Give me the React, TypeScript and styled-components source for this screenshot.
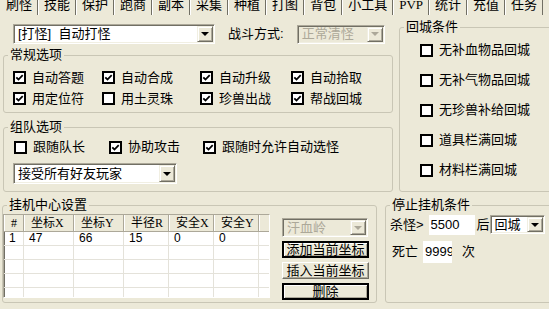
import React from 'react';
import styled, { createGlobalStyle } from 'styled-components';

const GlobalStyle = createGlobalStyle`
  html, body {
    margin: 0;
    padding: 0;
    background: #ece9d8;
  }
  body {
    font-family: "Liberation Sans", "Noto Sans CJK SC", sans-serif;
    font-size: 13px;
    line-height: 14px;
    color: #000;
  }
  * {
    box-sizing: border-box;
  }
`;

const TABS = ['刷怪', '技能', '保护', '跑商', '副本', '采集', '种植', '打图', '背包', '小工具', 'PVP', '统计', '充值', '任务'];

const ROUTINE = [
  { label: '自动答题', checked: true },
  { label: '自动合成', checked: true },
  { label: '自动升级', checked: true },
  { label: '自动拾取', checked: true },
  { label: '用定位符', checked: true },
  { label: '用土灵珠', checked: false },
  { label: '珍兽出战', checked: true },
  { label: '帮战回城', checked: true },
];

const TEAM = [
  { label: '跟随队长', checked: false },
  { label: '协助攻击', checked: true },
  { label: '跟随时允许自动选怪', checked: true },
];

const RETURN_RULES = ['无补血物品回城', '无补气物品回城', '无珍兽补给回城', '道具栏满回城', '材料栏满回城'];

const COLUMNS = [
  { title: '#', width: 20 },
  { title: '坐标X', width: 50 },
  { title: '坐标Y', width: 50 },
  { title: '半径R', width: 45 },
  { title: '安全X', width: 45 },
  { title: '安全Y', width: 45 },
  { title: '', width: 12 },
];

const POINTS = [
  ['1', '47', '66', '15', '0', '0', ''],
  ['', '', '', '', '', '', ''],
  ['', '', '', '', '', '', ''],
  ['', '', '', '', '', '', ''],
  ['', '', '', '', '', '', ''],
];

const gridColumns = COLUMNS.map(c => `${c.width}px`).join(' ');

type CheckProps = { label: string; checked: boolean };

const Check = ({ label, checked }: CheckProps) => (
  <CheckItem>
    <Box>
      {checked && (
        <svg width="9" height="9" viewBox="0 0 9 9">
          <path d="M1.3 4.3 3.5 6.5 7.7 2.1" fill="none" stroke="#000" strokeWidth="1.8" />
        </svg>
      )}
    </Box>
    <span>{label}</span>
  </CheckItem>
);

type ComboProps = { value: string; width: number; height?: number; disabled?: boolean };

const Combo = ({ value, width, height = 20, disabled = false }: ComboProps) => (
  <ComboBox $width={width} $height={height} $disabled={disabled}>
    <ComboValue $disabled={disabled}>{value}</ComboValue>
    <DropButton>
      <Arrow $disabled={disabled} />
    </DropButton>
  </ComboBox>
);

export default function App() {
  return (
    <Window>
      <GlobalStyle />
      <TabBar>
        {TABS.map((tab, i) => (
          <Tab key={tab} $active={i === 0}>
            {tab}
          </Tab>
        ))}
      </TabBar>

      <TopArea>
        <LeftColumn>
          <ModeRow>
            <Combo value="[打怪]  自动打怪" width={202} />
            <FieldLabel>战斗方式:</FieldLabel>
            <Combo value="正常清怪" width={88} height={19} disabled />
          </ModeRow>

          <Group $top={4}>
            <Legend>常规选项</Legend>
            <CheckGrid $cols="89px 98px 91px auto" $row={21} $pad="5px 0 3px 9px">
              {ROUTINE.map(item => (
                <Check key={item.label} {...item} />
              ))}
            </CheckGrid>
          </Group>

          <Group $top={7}>
            <Legend>组队选项</Legend>
            <TeamBody>
              <CheckGrid $cols="95px 94px auto" $row={20} $pad="0 0 0 1px">
                {TEAM.map(item => (
                  <Check key={item.label} {...item} />
                ))}
              </CheckGrid>
              <Combo value="接受所有好友玩家" width={164} height={21} />
            </TeamBody>
          </Group>
        </LeftColumn>

        <RightColumn>
          <Group $top={0} $grow>
            <Legend>回城条件</Legend>
            <RuleList>
              {RETURN_RULES.map(rule => (
                <RuleRow key={rule}>
                  <Check label={rule} checked={false} />
                </RuleRow>
              ))}
            </RuleList>
          </Group>
        </RightColumn>
      </TopArea>

      <BottomArea>
        <Group $top={0} $width={375}>
          <Legend>挂机中心设置</Legend>
          <CenterBody>
            <ListView>
              <HeaderRow>
                {COLUMNS.map((col, i) => (
                  <HeaderCell key={i}>{col.title}</HeaderCell>
                ))}
              </HeaderRow>
              {POINTS.map((row, r) => (
                <DataRow key={r}>
                  {row.map((cell, c) => (
                    <DataCell key={c}>{cell}</DataCell>
                  ))}
                </DataRow>
              ))}
            </ListView>
            <SideActions>
              <Combo value="汗血岭" width={86} height={19} disabled />
              <ActionButton $default>添加当前坐标</ActionButton>
              <ActionButton>插入当前坐标</ActionButton>
              <ActionButton $default>删除</ActionButton>
            </SideActions>
          </CenterBody>
        </Group>

        <Group $top={0} $width={170} $left={8}>
          <Legend>停止挂机条件</Legend>
          <StopBody>
            <StopRow>
              <span>杀怪&gt;</span>
              <NumberInput readOnly value="5500" $width={46} $height={20} $left={5} />
              <Unit $left={2}>后</Unit>
              <Combo value="回城" width={55} height={19} />
            </StopRow>
            <StopRow $indent={2} $top={4}>
              <span>死亡</span>
              <NumberInput readOnly value="9999" $width={29} $height={22} $left={5} />
              <Unit $left={10}>次</Unit>
            </StopRow>
          </StopBody>
        </Group>
      </BottomArea>
    </Window>
  );
}

const Window = styled.div`
  width: 549px;
  height: 309px;
  overflow: hidden;
  background: #ece9d8;
`;

const TabBar = styled.div`
  display: flex;
  height: 15px;
  overflow: hidden;
`;

const Tab = styled.div<{ $active?: boolean }>`
  flex: none;
  height: 17px;
  margin-top: -2px;
  padding: 0 5px;
  line-height: 13px;
  font-family: "Liberation Serif", "Noto Sans CJK SC", serif;
  border-left: 1px solid ${p => (p.$active ? 'transparent' : '#ffffff')};
  border-right: 1px solid #716f64;
`;

const TopArea = styled.div`
  display: flex;
  gap: 6px;
  padding-left: 3px;
`;

const LeftColumn = styled.div`
  display: flex;
  flex-direction: column;
  width: 390px;
  flex: none;
  padding-top: 9px;
`;

const RightColumn = styled.div`
  display: flex;
  flex-direction: column;
  width: 154px;
  flex: none;
  padding-top: 5px;
`;

const ModeRow = styled.div`
  display: flex;
  align-items: center;
  height: 20px;
  padding-left: 10px;
`;

const FieldLabel = styled.span`
  margin: 0 13px 0 13px;
`;

const Group = styled.fieldset<{ $top: number; $width?: number; $left?: number; $grow?: boolean }>`
  margin: ${p => p.$top}px 0 0 ${p => p.$left ?? 0}px;
  padding: 0;
  min-width: 0;
  width: ${p => (p.$width ? `${p.$width}px` : 'auto')};
  flex: ${p => (p.$width ? 'none' : p.$grow ? '1' : 'initial')};
  border: 1px solid #c9c6b5;
  border-radius: 3px;
`;

const Legend = styled.legend`
  margin-left: 4px;
  padding: 0 2px;
  line-height: 14px;
`;

const CheckGrid = styled.div<{ $cols: string; $row: number; $pad: string }>`
  display: grid;
  grid-template-columns: ${p => p.$cols};
  grid-auto-rows: ${p => p.$row}px;
  align-items: center;
  padding: ${p => p.$pad};
`;

const CheckItem = styled.label`
  display: flex;
  align-items: center;
  gap: 6px;
  white-space: nowrap;
`;

const Box = styled.span`
  flex: none;
  width: 13px;
  height: 13px;
  border: 2px solid #000;
  background: #fff;
  display: inline-flex;
  align-items: center;
  justify-content: center;
`;

const TeamBody = styled.div`
  display: flex;
  flex-direction: column;
  gap: 6px;
  padding: 3px 0 7px 9px;
`;

const ComboBox = styled.div<{ $width: number; $height: number; $disabled: boolean }>`
  flex: none;
  display: flex;
  width: ${p => p.$width}px;
  height: ${p => p.$height}px;
  padding: 1px;
  border: 1px solid;
  border-color: #aca899 #ffffff #ffffff #aca899;
  box-shadow: inset 1px 1px 0 #716f64, inset -1px -1px 0 #f1efe2;
  background: ${p => (p.$disabled ? '#ece9d8' : '#ffffff')};
`;

const ComboValue = styled.div<{ $disabled: boolean }>`
  flex: 1;
  min-width: 0;
  padding-left: 3px;
  display: flex;
  align-items: center;
  white-space: pre;
  overflow: hidden;
  color: ${p => (p.$disabled ? '#aca899' : '#000')};
`;

const DropButton = styled.div`
  flex: none;
  width: 16px;
  display: flex;
  align-items: center;
  justify-content: center;
  background: #ece9d8;
  border: 1px solid;
  border-color: #f1efe2 #716f64 #716f64 #f1efe2;
  box-shadow: inset 1px 1px 0 #ffffff, inset -1px -1px 0 #aca899;
`;

const Arrow = styled.span<{ $disabled: boolean }>`
  width: 0;
  height: 0;
  border-left: 4px solid transparent;
  border-right: 4px solid transparent;
  border-top: 4px solid ${p => (p.$disabled ? '#aca899' : '#000')};
`;

const RuleList = styled.div`
  display: flex;
  flex-direction: column;
  padding: 1px 0 5px 20px;
`;

const RuleRow = styled.div`
  display: flex;
  align-items: center;
  height: 30px;
`;

const BottomArea = styled.div`
  display: flex;
  margin-top: 6px;
  padding-left: 2px;
`;

const CenterBody = styled.div`
  display: flex;
  gap: 12px;
  padding: 2px 0 2px 0;
`;

const ListView = styled.div`
  flex: none;
  width: 267px;
  height: 84px;
  overflow: hidden;
  background: #fff;
  border: 1px solid;
  border-color: #aca899 #ffffff #ffffff #aca899;
  box-shadow: inset 1px 1px 0 #716f64;
  font-size: 12px;
`;

const HeaderRow = styled.div`
  display: grid;
  grid-template-columns: ${gridColumns};
  height: 17px;
  background: #ece9d8;
  border-bottom: 1px solid #aca899;
  font-family: "Liberation Serif", "Noto Sans CJK SC", serif;
`;

const HeaderCell = styled.div`
  padding-left: 6px;
  line-height: 16px;
  white-space: nowrap;
  overflow: hidden;
  border-left: 1px solid #ffffff;
  border-right: 1px solid #aca899;
`;

const DataRow = styled.div`
  display: grid;
  grid-template-columns: ${gridColumns};
  height: 14px;
`;

const DataCell = styled.div`
  padding-left: 5px;
  line-height: 13px;
  border-right: 1px solid #e4e2da;
  border-bottom: 1px solid #e4e2da;
`;

const SideActions = styled.div`
  display: flex;
  flex-direction: column;
  gap: 4px;
  padding-top: 4px;
`;

const ActionButton = styled.button<{ $default?: boolean }>`
  width: 87px;
  height: 17px;
  margin: 0;
  padding: 0;
  font: inherit;
  line-height: 13px;
  color: #000;
  background: #ece9d8;
  border: ${p => (p.$default ? '2px solid #000' : '1px solid')};
  border-color: ${p => (p.$default ? '#000' : '#ffffff #716f64 #716f64 #ffffff')};
  box-shadow: ${p => (p.$default ? 'inset 1px 1px 0 #fff, inset -1px -1px 0 #aca899' : 'inset -1px -1px 0 #aca899')};
  &:first-of-type {
    margin-top: 0;
  }
`;

const StopBody = styled.div`
  display: flex;
  flex-direction: column;
  padding: 1px 0 0 4px;
`;

const StopRow = styled.div<{ $indent?: number; $top?: number }>`
  display: flex;
  align-items: center;
  height: 23px;
  margin-top: ${p => p.$top ?? 0}px;
  padding-left: ${p => p.$indent ?? 0}px;
  white-space: nowrap;
`;

const NumberInput = styled.input<{ $width: number; $height: number; $left: number }>`
  flex: none;
  width: ${p => p.$width}px;
  height: ${p => p.$height}px;
  margin: 0 0 0 ${p => p.$left}px;
  padding: 0 0 0 2px;
  border: none;
  outline: none;
  background: #fff;
  font: inherit;
  color: #000;
`;

const Unit = styled.span<{ $left: number }>`
  margin-left: ${p => p.$left}px;
`;
